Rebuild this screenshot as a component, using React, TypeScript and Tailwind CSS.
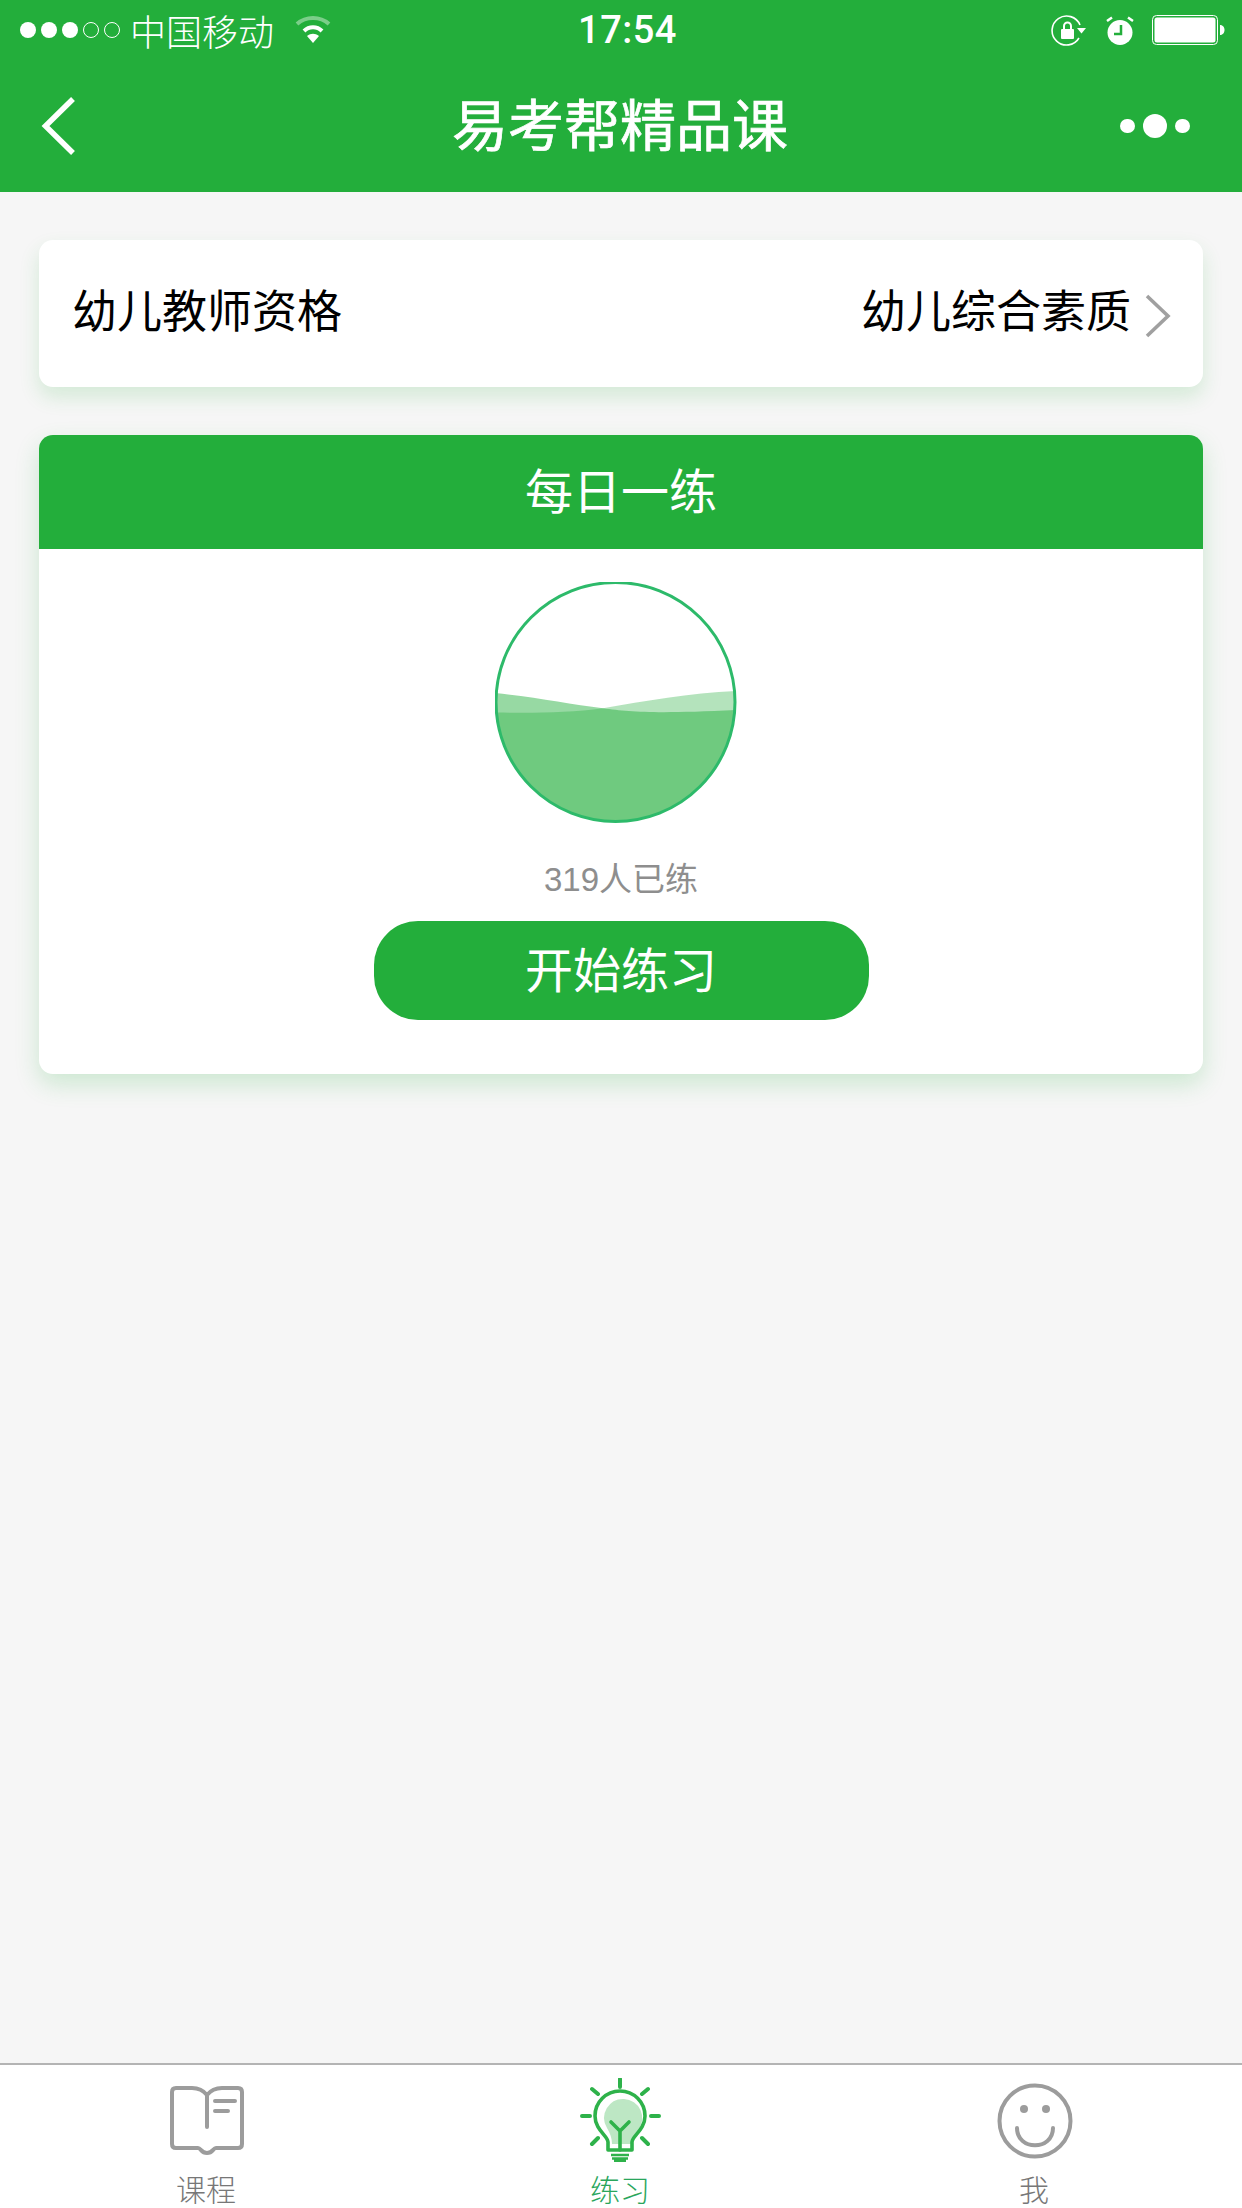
const CJK = "font-['Noto_Sans_CJK_SC','Liberation_Sans',sans-serif]";

function StatusBar() {
  return (
    <div className="h-[60px] flex items-center pl-[20px] pr-[17px] text-white">
      <div className="flex-1 flex items-center">
        <div className="flex items-center gap-[5px]">
          <span className="w-[16px] h-[16px] rounded-full bg-white" />
          <span className="w-[16px] h-[16px] rounded-full bg-white" />
          <span className="w-[16px] h-[16px] rounded-full bg-white" />
          <span className="w-[16px] h-[16px] rounded-full border border-white" />
          <span className="w-[16px] h-[16px] rounded-full border border-white" />
        </div>
        <span className="ml-[10px] text-[36px] leading-[44px] font-light">中国移动</span>
        <svg width="36" height="28" viewBox="0 0 36 28" className="ml-[21px]">
          <path d="M2 8 C11 0 25 0 34 8" fill="none" stroke="#fff" strokeOpacity="0.4" strokeWidth="4" />
          <path d="M9 15 C14 10 22 10 27 15" fill="none" stroke="#fff" strokeWidth="4" />
          <path d="M12 20 C16 17 20 17 24 20 L18 27 Z" fill="#fff" />
        </svg>
      </div>
      <span className="ml-[10px] font-['Roboto',sans-serif] text-[38px] leading-[44px] tracking-[0.5px] font-medium">17:54</span>
      <div className="flex-1 flex items-center justify-end">
        <svg width="35" height="31" viewBox="0 0 35 31">
          <path d="M29 10 A14.5 14.5 0 1 0 28 23" fill="none" stroke="#fff" strokeWidth="1.6" />
          <path d="M26 13 H35 L30.5 18.5 Z" fill="#fff" />
          <rect x="10" y="14" width="13" height="10" rx="1" fill="#fff" />
          <path d="M13 14 V11 A3.5 3.5 0 0 1 20 11 V14" fill="none" stroke="#fff" strokeWidth="2" />
        </svg>
        <svg width="28" height="29" viewBox="0 0 28 29" className="ml-[20px]">
          <ellipse cx="14" cy="16.5" rx="12.5" ry="12.5" fill="#fff" />
          <path d="M1 5 L6 1.5 M27 5 L22 1.5" stroke="#fff" strokeWidth="2.5" />
          <path d="M15 9 V18 H8" fill="none" stroke="#23ae3b" strokeWidth="2.5" />
        </svg>
        <svg width="73" height="30" viewBox="0 0 73 30" className="ml-[18px]">
          <rect x="0.5" y="0.5" width="65" height="29" rx="4" fill="none" stroke="#fff" />
          <rect x="2.5" y="2.5" width="61" height="25" rx="2.5" fill="#fff" />
          <path d="M68 10 C71 10 72.5 12.5 72.5 15 C72.5 17.5 71 20 68 20 Z" fill="#fff" />
        </svg>
      </div>
    </div>
  );
}

function NavBar() {
  return (
    <div className="h-[132px] relative flex items-center justify-center text-white">
      <svg width="36" height="60" viewBox="0 0 36 60" className="absolute left-[40px] top-[36px]">
        <path d="M33 3 L5.5 30 L33 57" fill="none" stroke="#fff" strokeWidth="5.5" />
      </svg>
      <h1 className="-mt-[8px] -ml-[2px] text-[56px] leading-[68px] font-normal [-webkit-text-stroke:0.7px_white]">易考帮精品课</h1>
      <div className="absolute right-[52px] top-[54px] flex items-center gap-[8px]">
        <span className="w-[15px] h-[14px] rounded-full bg-white" />
        <span className="w-[24px] h-[24px] rounded-full bg-white" />
        <span className="w-[15px] h-[14px] rounded-full bg-white" />
      </div>
    </div>
  );
}

function WaveBall() {
  return (
    <svg width="242" height="242" viewBox="0 0 242 242" className="mr-[11px]">
      <defs>
        <clipPath id="ball">
          <circle cx="120.5" cy="120" r="120" />
        </clipPath>
      </defs>
      <g clipPath="url(#ball)">
        <path d="M0 111 C40 115 75 122 108 126.3 C135 130 160 132 242 128 V242 H0 Z" fill="#23ae3b" fillOpacity="0.47" />
        <path d="M0 130.6 C40 131 75 131 108 126.3 C150 119 195 111 242 109 V242 H0 Z" fill="#23ae3b" fillOpacity="0.34" />
      </g>
      <circle cx="120.5" cy="120" r="119.5" fill="none" stroke="#2dba6a" strokeWidth="3" />
    </svg>
  );
}

function BookIcon() {
  return (
    <svg width="74" height="70" viewBox="0 0 74 70" className="mt-[8px]">
      <path
        d="M37 9 C33 4 28 2 22 2 H6 Q2 2 2 6 V58 Q2 62 6 62 H28 C31 62 31 67 37 67 C43 67 43 62 46 62 H68 Q72 62 72 58 V6 Q72 2 68 2 H52 C46 2 41 4 37 9 V41"
        fill="none"
        stroke="#9c9c9c"
        strokeWidth="4"
        strokeLinejoin="round"
        strokeLinecap="round"
      />
      <path d="M45 15 H65 M45 25 H58" stroke="#9c9c9c" strokeWidth="4" strokeLinecap="round" />
    </svg>
  );
}

function BulbIcon() {
  return (
    <svg width="82" height="84" viewBox="0 0 82 84">
      <path d="M44 21 A19 19 0 0 1 58 52 C54 57 52 60 52 66 H32 C32 60 30 55 27 50 A19 19 0 0 1 44 21 Z" fill="#23ae3b" fillOpacity="0.3" />
      <path d="M40 1 V9 M12 11 L18 16 M68 11 L62 16 M2 38 H10 M71 38 H79 M12 66 L18 60 M68 66 L62 60" stroke="#2eb24a" strokeWidth="4" strokeLinecap="round" />
      <path
        d="M28 72 V64 C28 58 15 52 15 38 A25 25 0 0 1 65 38 C65 52 52 58 52 64 V72 Z"
        fill="none"
        stroke="#2eb24a"
        strokeWidth="3.6"
        strokeLinejoin="round"
      />
      <path d="M31 44 L40 53 L49 44 M40 53 V72" fill="none" stroke="#2eb24a" strokeWidth="3.6" strokeLinecap="round" />
      <path d="M31 77 H49 M32 80.5 H48 M34 83 H46" stroke="#2eb24a" strokeWidth="2.4" />
    </svg>
  );
}

function SmileIcon() {
  return (
    <svg width="76" height="76" viewBox="0 0 76 76" className="mt-[5px]">
      <circle cx="38" cy="38" r="35.5" fill="none" stroke="#9c9c9c" strokeWidth="4" />
      <circle cx="27" cy="26" r="4" fill="#9c9c9c" />
      <circle cx="49" cy="26" r="4" fill="#9c9c9c" />
      <path d="M20 45 C20 68 56 68 56 45" fill="none" stroke="#9c9c9c" strokeWidth="4" strokeLinecap="round" />
    </svg>
  );
}

function Tab({ label, active, children }: { label: string; active?: boolean; children: React.ReactNode }) {
  return (
    <div className="flex flex-col items-center">
      <div className="h-[84px] flex justify-center">{children}</div>
      <span className={`mt-[11px] -ml-[2px] text-[30px] leading-[30px] font-light ${active ? "text-[#2aa65c]" : "text-[#777777]"}`}>{label}</span>
    </div>
  );
}

export default function App() {
  return (
    <div className={`${CJK} w-[1242px] h-[2208px] flex flex-col bg-[#f6f6f6] overflow-hidden`}>
      <header className="bg-[#23ae3b]">
        <StatusBar />
        <NavBar />
      </header>

      <main className="flex-1 px-[39px] pt-[48px]">
        {/* subject picker */}
        <div className="h-[147px] rounded-[14px] bg-white shadow-[0_10px_20px_rgba(35,174,59,0.16)] flex items-center justify-between pl-[33px] pr-[32px]">
          <span className="-mt-[9px] text-[45px] leading-[56px] font-normal text-black">幼儿教师资格</span>
          <div className="flex items-center">
            <span className="-mt-[9px] text-[45px] leading-[56px] font-normal text-black">幼儿综合素质</span>
            <svg width="26" height="44" viewBox="0 0 26 44" className="ml-[14px] mt-[4px]">
              <path d="M2 2 L23 22 L2 42" fill="none" stroke="#a0a0a0" strokeWidth="3.6" />
            </svg>
          </div>
        </div>

        {/* daily practice */}
        <section className="mt-[48px] rounded-[14px] bg-white shadow-[0_10px_24px_rgba(35,174,59,0.2)] overflow-hidden">
          <div className="h-[114px] pb-[8px] bg-[#23ae3b] flex items-center justify-center text-white text-[48px] leading-[60px] font-normal">每日一练</div>
          <div className="flex flex-col items-center pt-[33px] pb-[54px]">
            <WaveBall />
            <p className="mt-[36px] font-['Liberation_Sans','Noto_Sans_CJK_SC',sans-serif] text-[33px] leading-[40px] font-normal text-[#8e8e8e]">319人已练</p>
            <button className="mt-[21px] pb-[8px] w-[495px] h-[99px] rounded-[44px] bg-[#23ae3b] text-white text-[48px] leading-[60px] font-normal">开始练习</button>
          </div>
        </section>
      </main>

      <nav className="h-[145px] bg-white border-t-2 border-[#b4b4b4] grid grid-cols-3 pt-[13px]">
        <Tab label="课程"><BookIcon /></Tab>
        <Tab label="练习" active><BulbIcon /></Tab>
        <Tab label="我"><SmileIcon /></Tab>
      </nav>
    </div>
  );
}
